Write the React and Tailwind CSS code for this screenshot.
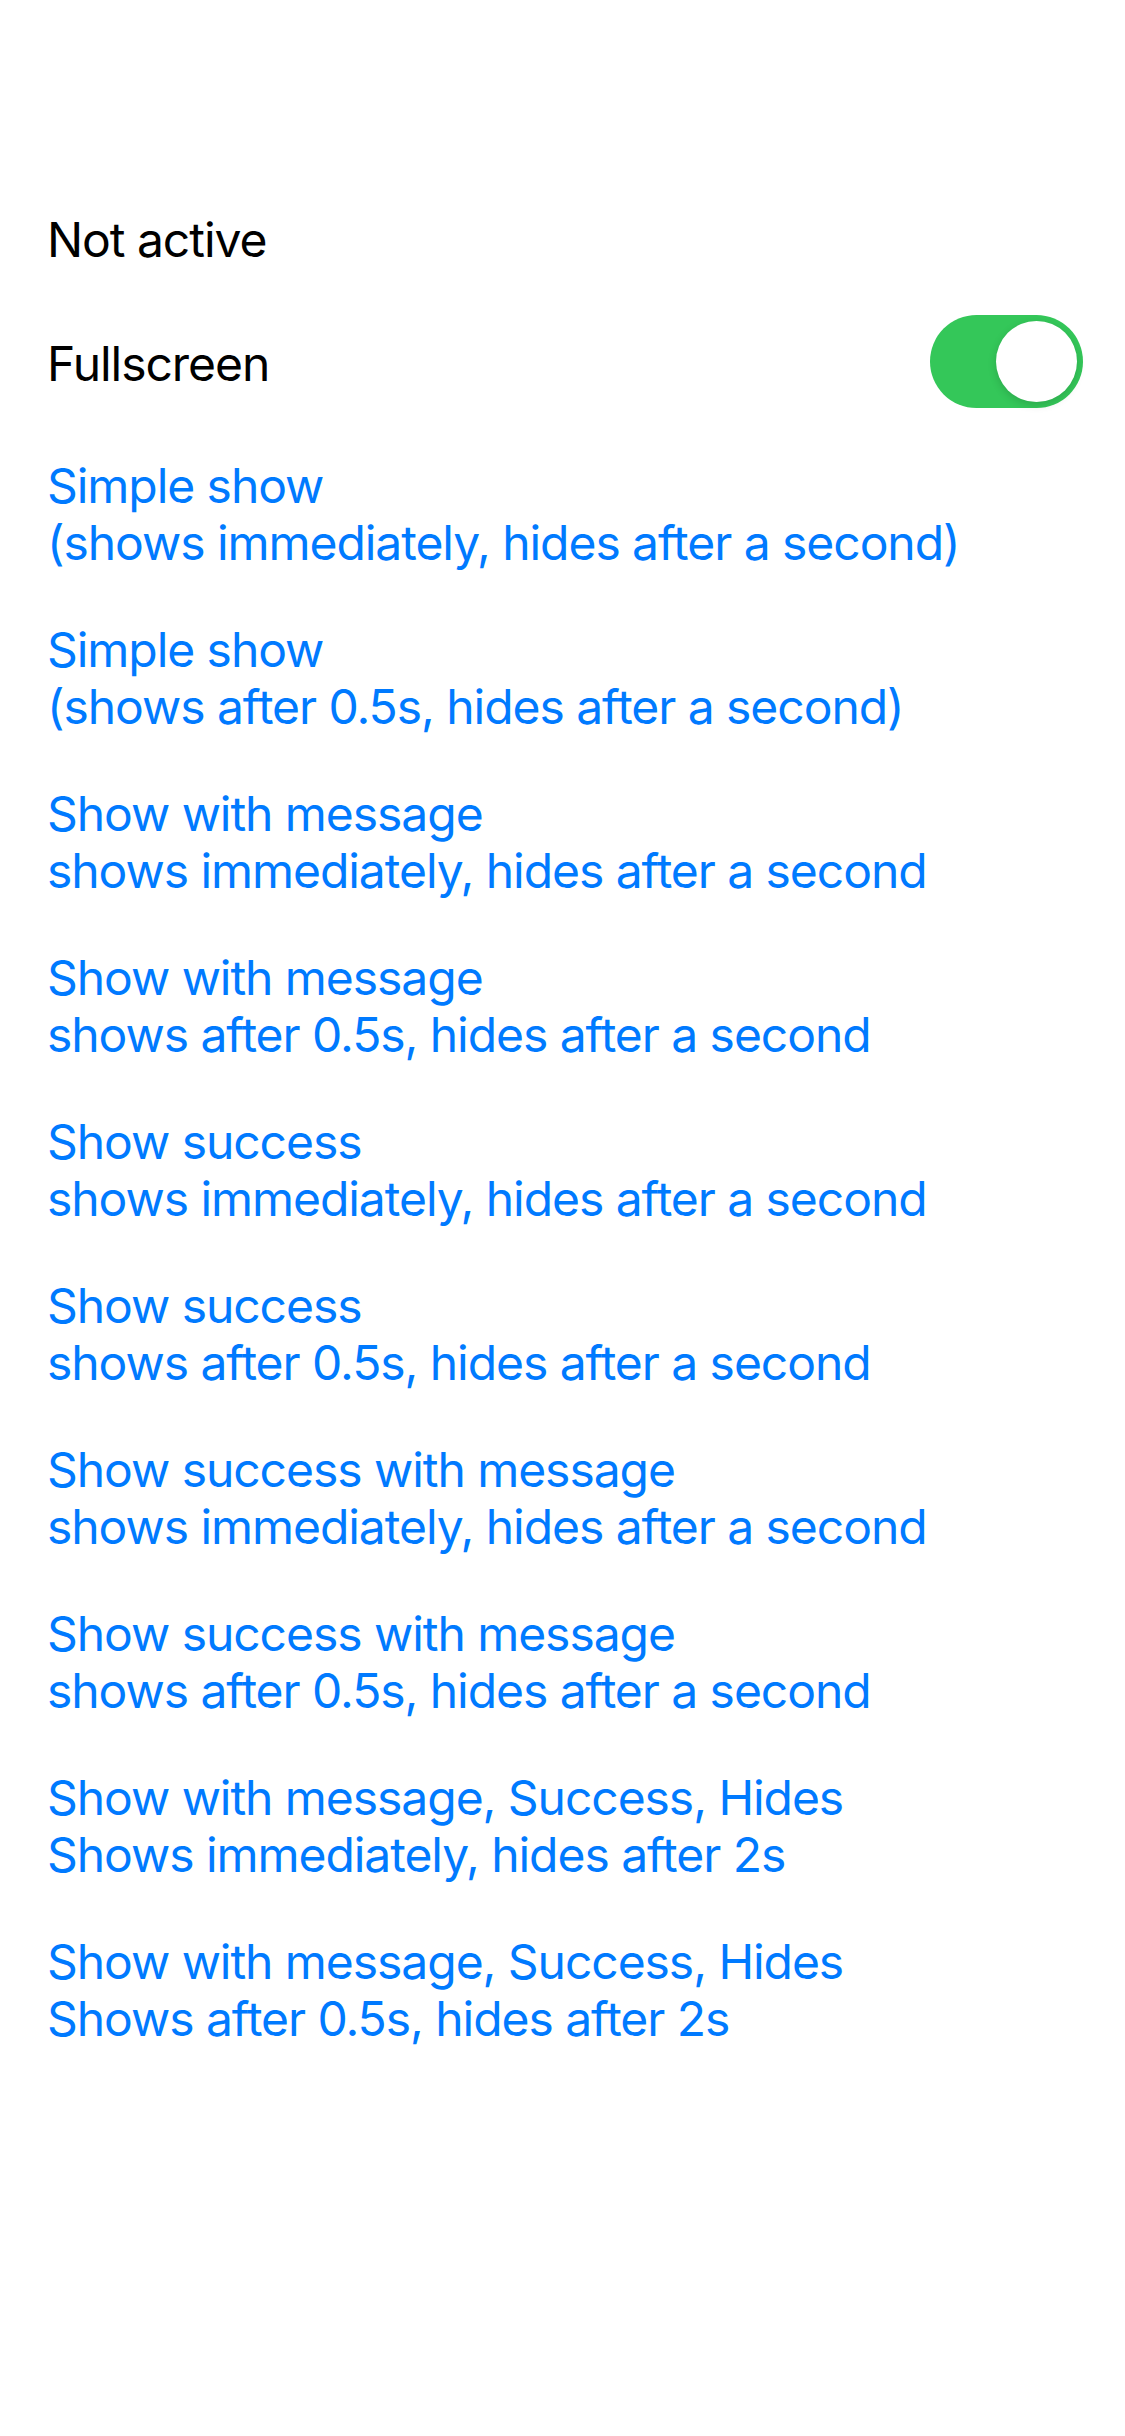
import { useState } from "react";

const items = [
  ["Simple show", "(shows immediately, hides after a second)"],
  ["Simple show", "(shows after 0.5s, hides after a second)"],
  ["Show with message", "shows immediately, hides after a second"],
  ["Show with message", "shows after 0.5s, hides after a second"],
  ["Show success", "shows immediately, hides after a second"],
  ["Show success", "shows after 0.5s, hides after a second"],
  ["Show success with message", "shows immediately, hides after a second"],
  ["Show success with message", "shows after 0.5s, hides after a second"],
  ["Show with message, Success, Hides", "Shows immediately, hides after 2s"],
  ["Show with message, Success, Hides", "Shows after 0.5s, hides after 2s"],
];

export default function App() {
  const [fullscreen, setFullscreen] = useState(true);

  return (
    <div
      className="w-[1125px] h-[2436px] bg-white pl-[47px] pr-[42px] pt-[211px] text-[48px] leading-[57px] tracking-[-1.05px]"
      style={{ fontFamily: "Inter, 'Noto Sans', sans-serif" }}
    >
      {/* Status */}
      <div className="text-black">Not active</div>

      {/* Fullscreen switch */}
      <div className="mt-[47px] flex items-center justify-between h-[93px]">
        <span className="text-black pt-[4px]">Fullscreen</span>
        <button
          onClick={() => setFullscreen(!fullscreen)}
          className={`relative w-[153px] h-[93px] rounded-full transition-colors ${
            fullscreen ? "bg-[#34c759]" : "bg-[#e9e9ea]"
          }`}
        >
          <span
            className={`absolute top-[6px] w-[81px] h-[81px] rounded-full bg-white shadow-[0_3px_8px_rgba(0,0,0,0.15)] transition-all ${
              fullscreen ? "left-[66px]" : "left-[6px]"
            }`}
          />
        </button>
      </div>

      {/* Actions */}
      <div className="mt-[49px] flex flex-col gap-[50px]">
        {items.map(([title, sub], i) => (
          <button key={i} className="text-left text-[#007aff]">
            <div>{title}</div>
            <div>{sub}</div>
          </button>
        ))}
      </div>
    </div>
  );
}
